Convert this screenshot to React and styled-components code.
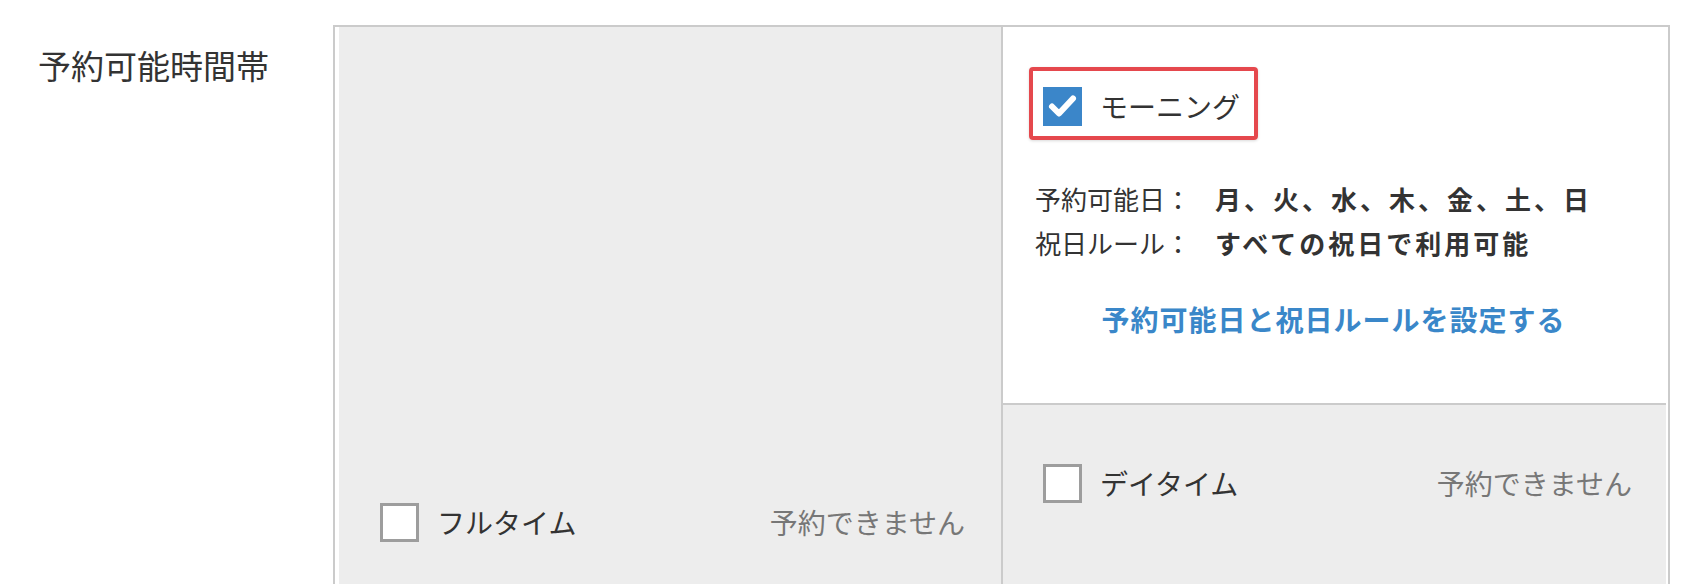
import React from 'react';
import styled, { createGlobalStyle } from 'styled-components';

const GlobalStyle = createGlobalStyle`
  html, body {
    margin: 0;
    padding: 0;
    background: #fff;
    height: 584px;
    overflow: hidden;
  }
  body {
    font-family: "Noto Sans CJK JP", "Noto Sans", sans-serif;
    color: #333;
  }
`;

const Page = styled.div`
  display: grid;
  grid-template-columns: 295px 1337px;
  padding: 25px 0 0 38px;
`;

const FieldLabel = styled.div`
  font-size: 33px;
  line-height: 48px;
  padding-top: 16px;
`;

const SlotTable = styled.div`
  display: grid;
  grid-template-columns: 662px 665px;
  padding: 0 2px 0 4px;
  border: 2px solid #cbcbcb;
  border-bottom: none;
`;

const SideCell = styled.div`
  background: #ededed;
  min-height: 990px;
  display: flex;
  align-items: center;
  padding: 0 36px 0 41px;
`;

const Column = styled.div`
  display: flex;
  flex-direction: column;
  border-left: 2px solid #cbcbcb;
`;

const ActiveCell = styled.div`
  background: #fff;
  height: 378px;
  box-sizing: border-box;
  padding: 40px 34px 0 32px;
  border-bottom: 2px solid #cbcbcb;
`;

const IdleCell = styled.div`
  flex: 1;
  background: #ededed;
  padding: 58px 34px 0 40px;
`;

const SlotRow = styled.div`
  flex: 1;
  display: flex;
  align-items: center;
  justify-content: space-between;
`;

const Choice = styled.label`
  display: inline-flex;
  align-items: center;
  gap: 18px;
  font-size: 28px;
  line-height: 40px;
  color: #333;
`;

const Highlight = styled.div`
  display: inline-flex;
  margin-left: -6px;
  padding: 15px 14px 10px 10px;
  border: 4px solid #e5484d;
  border-radius: 4px;
  box-shadow: 0 1px 3px rgba(0, 0, 0, 0.15);
`;

const Box = styled.span`
  width: 39px;
  height: 39px;
  box-sizing: border-box;
  display: inline-flex;
  align-items: center;
  justify-content: center;
  background: ${p => (p.checked ? '#3b86c9' : '#fff')};
  border: ${p => (p.checked ? 'none' : '3px solid #9d9d9d')};
`;

const Status = styled.span`
  font-size: 28px;
  line-height: 40px;
  color: #777;
`;

const InfoList = styled.dl`
  display: grid;
  grid-template-columns: auto 1fr;
  column-gap: 24px;
  margin: 37px 0 0;
  font-size: 26px;
  line-height: 44px;
  dt, dd {
    margin: 0;
  }
  dd {
    font-weight: 700;
    letter-spacing: 3px;
  }
`;

const SetupLink = styled.a`
  display: block;
  margin-top: 32px;
  text-align: center;
  font-size: 28px;
  line-height: 44px;
  font-weight: 700;
  letter-spacing: 1px;
  color: #3a87c9;
  text-decoration: none;
`;

const CheckBox = ({ checked }) => (
  <Box checked={checked}>
    {checked && (
      <svg width="39" height="39" viewBox="0 0 39 39">
        <polyline
          points="9,19.5 16,26.5 30,11.5"
          fill="none"
          stroke="#fff"
          strokeWidth="6"
          strokeLinecap="round"
          strokeLinejoin="round"
        />
      </svg>
    )}
  </Box>
);

export default function App() {
  return (
    <>
      <GlobalStyle />
      <Page>
        <FieldLabel>予約可能時間帯</FieldLabel>
        <SlotTable>
          <SideCell>
            <SlotRow>
              <Choice>
                <CheckBox />
                フルタイム
              </Choice>
              <Status>予約できません</Status>
            </SlotRow>
          </SideCell>
          <Column>
            <ActiveCell>
              <Highlight>
                <Choice>
                  <CheckBox checked />
                  モーニング
                </Choice>
              </Highlight>
              <InfoList>
                <dt>予約可能日：</dt>
                <dd>月、火、水、木、金、土、日</dd>
                <dt>祝日ルール：</dt>
                <dd>すべての祝日で利用可能</dd>
              </InfoList>
              <SetupLink href="#">予約可能日と祝日ルールを設定する</SetupLink>
            </ActiveCell>
            <IdleCell>
              <SlotRow>
                <Choice>
                  <CheckBox />
                  デイタイム
                </Choice>
                <Status>予約できません</Status>
              </SlotRow>
            </IdleCell>
          </Column>
        </SlotTable>
      </Page>
    </>
  );
}
